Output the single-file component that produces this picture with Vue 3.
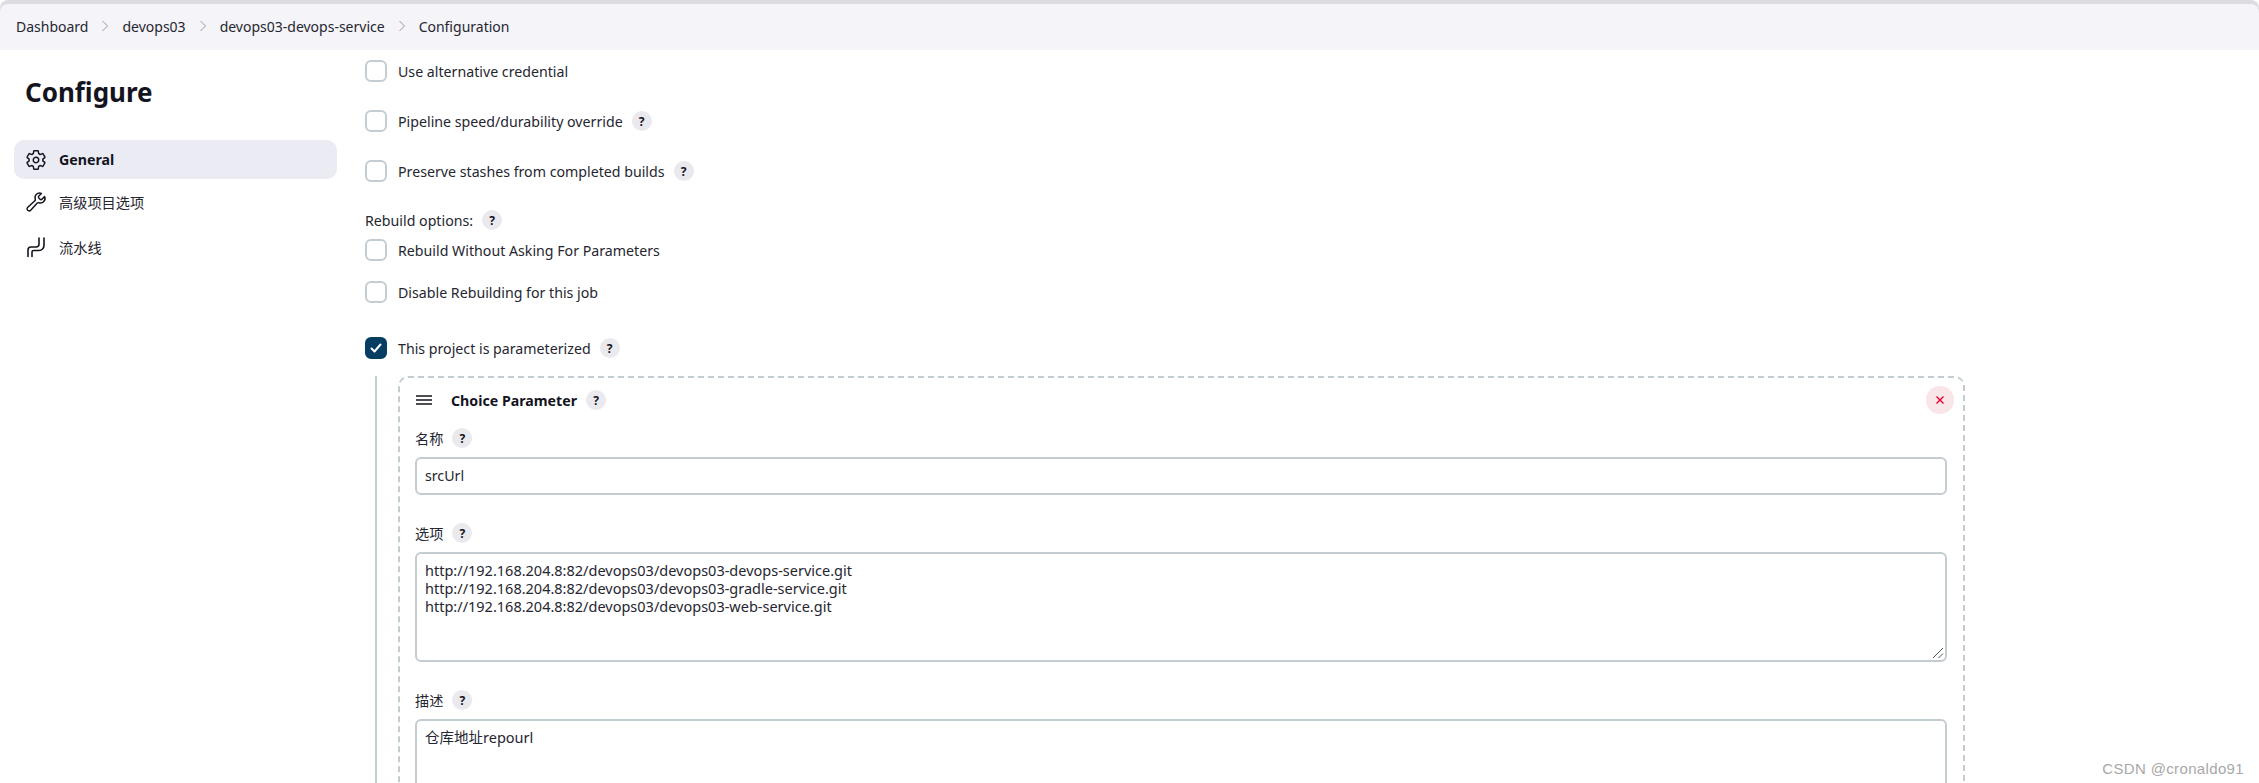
<script setup>
const rows1 = [
  { label: 'Use alternative credential', help: false },
  { label: 'Pipeline speed/durability override', help: true },
  { label: 'Preserve stashes from completed builds', help: true },
]
const crumbs = ['Dashboard', 'devops03', 'devops03-devops-service', 'Configuration']
const urls = `http://192.168.204.8:82/devops03/devops03-devops-service.git
http://192.168.204.8:82/devops03/devops03-gradle-service.git
http://192.168.204.8:82/devops03/devops03-web-service.git`
</script>

<template>
  <div class="page">
    <nav class="crumbs">
      <template v-for="(c, i) in crumbs" :key="c">
        <span class="crumb">{{ c }}</span>
        <svg v-if="i < crumbs.length - 1" class="sep" viewBox="0 0 10 14"><path d="M2.5 2l5 5-5 5" /></svg>
      </template>
    </nav>
    <div class="body">
      <aside class="side">
        <h1 class="title">Configure</h1>
        <a class="item active">
          <svg class="ico" viewBox="0 0 512 512"><path d="M262.29 192.31a64 64 0 1057.4 57.4 64.13 64.13 0 00-57.4-57.4zM416.39 256a154.34 154.34 0 01-1.53 20.79l45.21 35.46a10.81 10.81 0 012.45 13.75l-42.77 74a10.81 10.81 0 01-13.14 4.59l-44.9-18.08a16.11 16.11 0 00-15.17 1.75A164.48 164.48 0 01325 400.8a15.94 15.94 0 00-8.82 12.14l-6.73 47.89a11.08 11.08 0 01-10.68 9.17h-85.54a11.11 11.11 0 01-10.69-8.87l-6.72-47.82a16.07 16.07 0 00-9-12.22 155.3 155.3 0 01-21.46-12.57 16 16 0 00-15.11-1.71l-44.89 18.07a10.81 10.81 0 01-13.14-4.58l-42.77-74a10.8 10.8 0 012.45-13.75l38.21-30a16.05 16.05 0 006-14.08c-.36-4.17-.58-8.33-.58-12.5s.21-8.27.58-12.35a16 16 0 00-6.07-13.94l-38.19-30A10.81 10.81 0 0149.48 186l42.77-74a10.81 10.81 0 0113.14-4.59l44.9 18.08a16.11 16.11 0 0015.17-1.75A164.48 164.48 0 01187 111.2a15.94 15.94 0 008.82-12.14l6.73-47.89A11.08 11.08 0 01213.23 42h85.54a11.11 11.11 0 0110.69 8.87l6.72 47.82a16.07 16.07 0 009 12.22 155.3 155.3 0 0121.46 12.57 16 16 0 0015.11 1.71l44.89-18.07a10.81 10.81 0 0113.14 4.58l42.77 74a10.8 10.8 0 01-2.45 13.75l-38.21 30a16.05 16.05 0 00-6.05 14.08c.33 4.14.55 8.3.55 12.47z" /></svg>
          <span>General</span>
        </a>
        <a class="item">
          <svg class="ico" viewBox="0 0 512 512"><path d="M393.87 190a32.1 32.1 0 01-45.25 0l-26.57-26.57a32.09 32.09 0 010-45.26L382.19 58a1 1 0 00-.3-1.64c-38.82-16.64-89.15-8.16-121.11 23.57-30.58 30.35-32.32 76-21.12 115.84a31.93 31.93 0 01-9.06 32.08L64 380a48.17 48.17 0 1068 68l153.86-167a31.93 31.93 0 0131.6-9.13c39.54 10.59 84.54 8.6 114.72-21.19 32.49-32 39.5-88.56 23.75-120.93a1 1 0 00-1.6-.26z" /></svg>
          <span>高级项目选项</span>
        </a>
        <a class="item">
          <svg class="ico pipe" viewBox="0 0 22 22"><path d="M3 20.5v-6.5a3 3 0 013-3h5a3 3 0 003-3V2M7 20.5V16a1.5 1.5 0 011.5-1.5H14a5 5 0 005-5V2" /></svg>
          <span>流水线</span>
        </a>
      </aside>

      <main class="main">
        <div v-for="r in rows1" :key="r.label" class="check">
          <span class="box"></span>
          <span>{{ r.label }}</span>
          <span v-if="r.help" class="help">?</span>
        </div>

        <div class="rebuild-title"><span>Rebuild options:</span><span class="help">?</span></div>
        <div class="check tight"><span class="box"></span><span>Rebuild Without Asking For Parameters</span></div>
        <div class="check tight2"><span class="box"></span><span>Disable Rebuilding for this job</span></div>

        <div class="check param">
          <span class="box on"><svg viewBox="0 0 22 22"><path d="M6.5 11.5l3 3 6-7" /></svg></span>
          <span>This project is parameterized</span>
          <span class="help">?</span>
        </div>

        <div class="nested">
          <section class="card">
            <header class="card-head">
              <svg class="handle" viewBox="0 0 16 10"><path d="M0 1h16M0 5h16M0 9h16" /></svg>
              <strong>Choice Parameter</strong>
              <span class="help">?</span>
              <button class="close" type="button" aria-label="close">
                <svg viewBox="0 0 10 10"><path d="M1.5 1.5l7 7M8.5 1.5l-7 7" /></svg>
              </button>
            </header>

            <div class="field-label"><span>名称</span><span class="help">?</span></div>
            <div class="input">srcUrl</div>

            <div class="field-label second"><span>选项</span><span class="help">?</span></div>
            <div class="area">{{ urls }}<svg class="grip" viewBox="0 0 12 12"><path d="M1 11L11 1M6.5 11L11 6.5" /></svg></div>

            <div class="field-label third"><span>描述</span><span class="help">?</span></div>
            <div class="area">仓库地址repourl</div>
          </section>
        </div>
      </main>
    </div>
    <div class="watermark">CSDN @cronaldo91</div>
  </div>
</template>

<style>
html, body { margin: 0; background: #fff; overflow: hidden; }
</style>

<style scoped>
.page {
  position: relative;
  height: 783px;
  overflow: hidden;
  background: #fff;
  color: #262630;
  font-family: "Noto Sans", "Noto Sans CJK SC", sans-serif;
  font-size: 14.2px;
}
.crumbs {
  display: flex;
  align-items: center;
  height: 46px;
  margin-top: 4px;
  padding-left: 16px;
  padding-bottom: 2px;
  box-sizing: border-box;
  background: #f4f4f9;
  box-shadow: 0 -4px 0 #dcdce2;
  border-radius: 8px 8px 0 0;
  font-size: 14px;
}
.sep { width: 10px; height: 14px; margin: 0 12px; fill: none; stroke: #9a9aa4; stroke-width: 1; }
.body { display: flex; }
.side { width: 337px; flex: none; padding-left: 14px; box-sizing: border-box; }
.title { margin: 22px 0 0 11px; height: 40px; font-size: 26px; line-height: 40px; font-weight: 700; color: #14141f; }
.item {
  display: flex;
  align-items: center;
  gap: 12px;
  height: 39px;
  padding-left: 11px;
  border-radius: 10px;
}
.item.active { margin-top: 28px; margin-bottom: 3px; background: #ebebf4; font-weight: 700; color: #14141f; }
.item + .item:not(.active) { margin-bottom: 6px; }
.ico { width: 22px; height: 22px; flex: none; fill: none; stroke: #14141f; stroke-width: 34; stroke-linecap: round; stroke-linejoin: round; }
.ico.pipe { stroke-width: 1.6; }
.main { width: 1627px; padding-left: 28px; box-sizing: border-box; padding-top: 10px; }
.check { display: flex; align-items: center; height: 22px; margin-bottom: 28px; }
.box {
  width: 22px;
  height: 22px;
  box-sizing: border-box;
  margin-right: 11px;
  border: 2px solid #c3ccd1;
  border-radius: 6px;
  background: #fff;
}
.box.on { background: #063e63; border-color: #063e63; }
.box svg { display: block; width: 22px; height: 22px; margin: -2px; fill: none; stroke: #fff; stroke-width: 2; stroke-linecap: round; stroke-linejoin: round; }
.help {
  display: inline-flex;
  align-items: center;
  justify-content: center;
  width: 20px;
  height: 20px;
  margin-left: 9px;
  border-radius: 50%;
  background: #e9e9ee;
  font-size: 12px;
  font-weight: 700;
  color: #14141f;
}
.rebuild-title { display: flex; align-items: center; height: 22px; margin-bottom: 8px; margin-top: -1px; }
.check.tight { margin-bottom: 20px; }
.check.tight2 { margin-bottom: 34px; }
.check.param { margin-bottom: 17px; }
.nested { border-left: 2px solid #c3ccd1; margin-left: 10px; padding-left: 21px; }
.card {
  width: 1567px;
  box-sizing: border-box;
  padding: 8px 16px 60px 15px;
  border: 2px dashed #c3ccd1;
  border-radius: 10px;
}
.card-head { position: relative; display: flex; align-items: center; height: 28px; color: #14141f; }
.handle { width: 16px; height: 10px; margin-left: 1px; margin-right: 19px; fill: none; stroke: #14141f; stroke-width: 1.5; }
.close {
  position: absolute;
  right: -7px;
  top: 0;
  display: flex;
  align-items: center;
  justify-content: center;
  width: 28px;
  height: 28px;
  padding: 0;
  border: 0;
  border-radius: 50%;
  background: #f9e6e9;
}
.close svg { width: 10px; height: 10px; fill: none; stroke: #e6002e; stroke-width: 1.4; }
.field-label { display: flex; align-items: center; height: 20px; margin-top: 14px; margin-bottom: 9px; }
.field-label.second { margin-top: 28px; }
.field-label.third { margin-top: 28px; }
.input, .area {
  box-sizing: border-box;
  border: 2px solid #c3ccd1;
  border-radius: 6px;
  background: #fff;
  padding: 0 8px;
}
.input { height: 38px; line-height: 34px; }
.area { position: relative; height: 110px; padding-top: 7px; line-height: 18px; white-space: pre; font-size: 14.5px; }
.grip { position: absolute; right: 1px; bottom: 1px; width: 12px; height: 12px; fill: none; stroke: #555; stroke-width: 1; }
.watermark {
  position: absolute;
  right: 15px;
  bottom: 6px;
  font-family: "Liberation Sans", sans-serif;
  font-size: 15px;
  letter-spacing: .35px;
  color: #a8a8a8;
}
</style>
